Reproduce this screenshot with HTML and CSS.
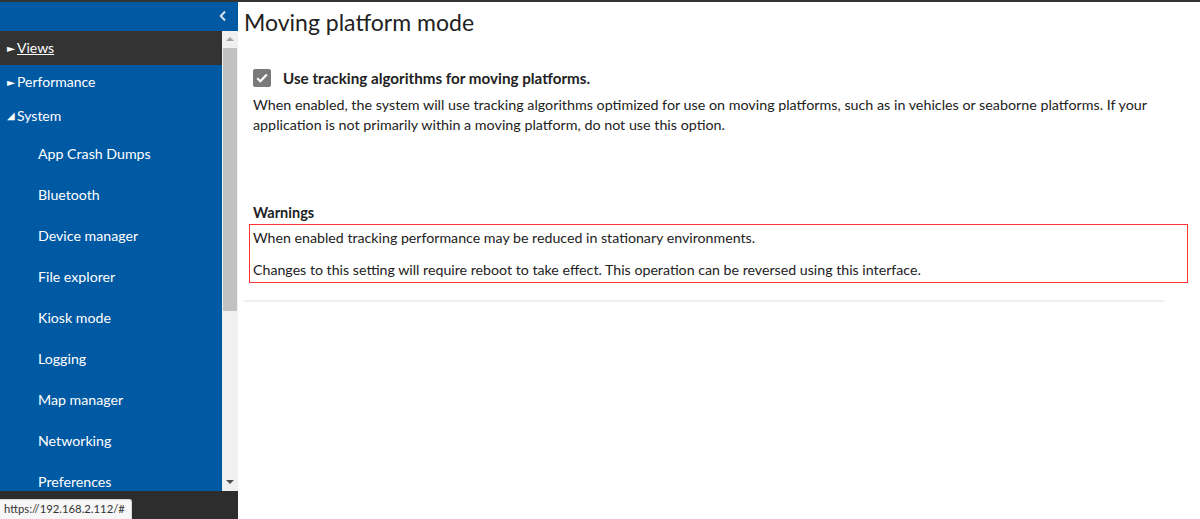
FILE: index.html
```html
<!DOCTYPE html>
<html>
<head>
<meta charset="utf-8">
<link rel="stylesheet" href="styles.css">
</head>
<body>
<div class="topline"></div>
<div class="app">
  <aside class="sidebar">
    <div class="sidebar-head">
      <svg class="collapse" width="10" height="12" viewBox="0 0 10 12"><path d="M7 1.5 L2.8 6 L7 10.5" fill="none" stroke="#d6e2ef" stroke-width="2"/></svg>
    </div>
    <div class="sidebar-body">
      <nav class="nav">
        <div class="nav-top active"><span class="tri">&#9658;</span><a href="#">Views</a></div>
        <div class="nav-top"><span class="tri">&#9658;</span>Performance</div>
        <div class="nav-top"><span class="tri open">&#9698;</span>System</div>
        <div class="nav-sub">App Crash Dumps</div>
        <div class="nav-sub">Bluetooth</div>
        <div class="nav-sub">Device manager</div>
        <div class="nav-sub">File explorer</div>
        <div class="nav-sub">Kiosk mode</div>
        <div class="nav-sub">Logging</div>
        <div class="nav-sub">Map manager</div>
        <div class="nav-sub">Networking</div>
        <div class="nav-sub">Preferences</div>
        <div class="nav-sub">Research mode</div>
      </nav>
      <div class="scrollbar">
        <div class="arrow up"></div>
        <div class="track"><div class="thumb"></div></div>
        <div class="arrow down"></div>
      </div>
    </div>
    <div class="sidebar-foot">
      <div class="status">https://192.168.2.112/#</div>
    </div>
  </aside>
  <main class="main">
    <h1 class="title">Moving platform mode</h1>
    <section class="panel">
      <label class="check-row">
        <span class="checkbox"><svg width="12" height="10" viewBox="0 0 12 10"><path d="M1.2 5.2 L4.4 8.3 L10.8 1.6" fill="none" stroke="#fff" stroke-width="2.2"/></svg></span>
        <span class="check-label">Use tracking algorithms for moving platforms.</span>
      </label>
      <p class="desc">When enabled, the system will use tracking algorithms optimized for use on moving platforms, such as in vehicles or seaborne platforms. If your application is not primarily within a moving platform, do not use this option.</p>
      <h2 class="warn-title">Warnings</h2>
      <div class="warn-box">
        <p>When enabled tracking performance may be reduced in stationary environments.</p>
        <p>Changes to this setting will require reboot to take effect. This operation can be reversed using this interface.</p>
      </div>
    </section>
    <hr class="divider">
  </main>
</div>
</body>
</html>
```

FILE: styles.css
```css
html, body {
  margin: 0;
  padding: 0;
  background: #fff;
  font-family: "Lato", "Open Sans", sans-serif;
  color: #222;
  overflow: hidden;
}

.topline {
  height: 2px;
  background: #333;
}

.app {
  display: flex;
  height: 517px;
}

.sidebar {
  width: 238px;
  flex: none;
  display: flex;
  flex-direction: column;
}

.sidebar-head {
  height: 29px;
  background: #0059a3;
  display: flex;
  justify-content: flex-end;
  align-items: center;
  padding-right: 10px;
}

.collapse {
  margin-top: -2px;
}

.sidebar-body {
  flex: 1;
  display: flex;
  min-height: 0;
}

.nav {
  width: 222px;
  background: #0059a3;
  overflow: hidden;
  color: #fff;
  font-size: 14px;
}

.nav-top {
  height: 34px;
  display: flex;
  align-items: center;
  padding-left: 7px;
  padding-bottom: 1px;
  box-sizing: border-box;
}

.nav-top.active {
  background: #333;
}

.nav-top a {
  color: #fff;
  text-decoration: underline;
}

.tri {
  font-size: 10.5px;
  width: 10px;
  display: inline-block;
  font-family: "DejaVu Sans", sans-serif;
}

.tri.open {
  font-size: 10px;
}

.nav-sub {
  height: 41px;
  display: flex;
  align-items: center;
  padding-left: 38px;
  padding-bottom: 1px;
  box-sizing: border-box;
  font-size: 14.2px;
}

.scrollbar {
  width: 16px;
  background: #f0f0f0;
  display: flex;
  flex-direction: column;
}

.arrow {
  height: 17px;
  position: relative;
}

.arrow::after {
  content: "";
  position: absolute;
  left: 4px;
  top: 6px;
  border-left: 4px solid transparent;
  border-right: 4px solid transparent;
}

.arrow.up::after {
  border-bottom: 4px solid #a3a3a3;
}

.arrow.down::after {
  border-top: 4px solid #505050;
}

.track {
  flex: 1;
  padding: 0 1px;
}

.thumb {
  height: 263px;
  background: #c1c1c1;
}

.sidebar-foot {
  height: 28px;
  background: #2d2d2d;
  display: flex;
  align-items: flex-end;
}

.status {
  background: #f7f7f7;
  border: 1px solid #d9d9d9;
  border-left: none;
  border-bottom: none;
  border-radius: 0 3px 0 0;
  font-size: 11.3px;
  color: #333;
  padding: 0 6px 2px 4px;
  height: 17px;
  line-height: 17px;
  font-family: "Lato", sans-serif;
}

.main {
  flex: 1;
  padding-left: 6px;
  padding-right: 12px;
}

.title {
  margin: 6px 0 0 0;
  font-size: 23px;
  font-weight: 400;
  line-height: 29px;
  color: #222;
}

.panel {
  padding: 32px 0 0 9px;
}

.check-row {
  display: flex;
  align-items: center;
  gap: 12px;
}

.checkbox {
  width: 18px;
  height: 18px;
  background: #7a7a7a;
  border-radius: 2px;
  display: flex;
  align-items: center;
  justify-content: center;
}

.check-label {
  font-weight: 700;
  font-size: 15.2px;
}

.desc {
  margin: 8px 0 0 0;
  font-size: 14.3px;
  line-height: 20px;
  color: #222;
}

.warn-title {
  margin: 68px 0 0 0;
  font-size: 14.5px;
  font-weight: 700;
  line-height: 20px;
}

.warn-box {
  margin: 1px 0 0 -4px;
  border: 1px solid #f33;
  padding: 2px 0 1px 3px;
}

.warn-box p {
  margin: 0;
  font-size: 14.2px;
  line-height: 22px;
}

.warn-box p + p {
  margin-top: 10px;
}

.divider {
  margin: 17px 24px 0 0;
  border: none;
  height: 2px;
  background: #eee;
}
```
